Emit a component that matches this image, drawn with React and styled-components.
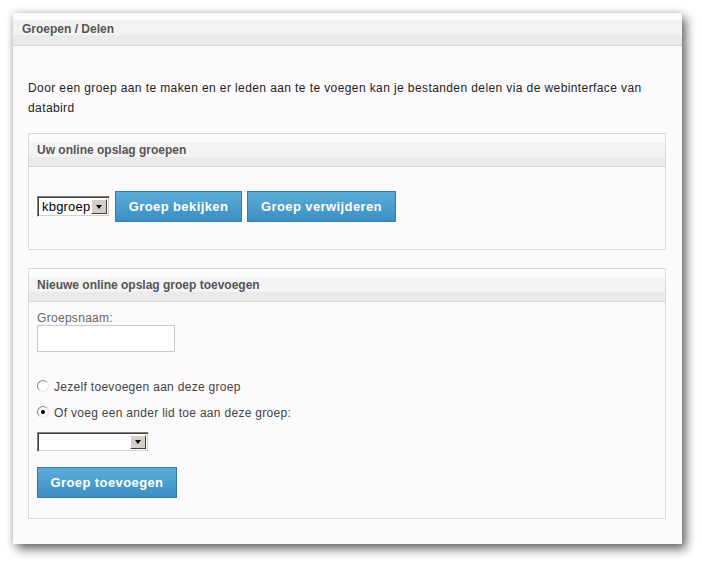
import React from "react";
import styled, { createGlobalStyle } from "styled-components";

const GlobalStyle = createGlobalStyle`
  html, body {
    margin: 0;
    padding: 0;
    background: #ffffff;
    font-family: "Liberation Sans", Arial, sans-serif;
  }
`;

const Page = styled.div`
  padding: 13px 20px 20px 13px;
  min-height: 565px;
  box-sizing: border-box;
`;

const Panel = styled.div`
  width: 669px;
  background: #fdfafd;
  box-shadow: 4px 5px 10px rgba(0, 0, 0, 0.6), -1px -1px 6px rgba(0, 0, 0, 0.12);
  padding-bottom: 25px;
`;

const BarHeader = styled.div`
  height: ${(p) => p.h || 32}px;
  display: flex;
  align-items: center;
  padding-left: ${(p) => p.pl || 8}px;
  border-bottom: 1px solid #d4d2d4;
  background: linear-gradient(
    #fdfcfd 0,
    #fdfcfd ${(p) => p.w || 8}px,
    #f4f3f4 ${(p) => p.w || 8}px,
    #f4f3f4 ${(p) => p.m || 23}px,
    #ebeaeb ${(p) => p.m || 23}px
  );
`;

const Title = styled.span`
  font-size: 12px;
  font-weight: bold;
  color: #555555;
`;

const Content = styled.div`
  padding: 0 16px 0 15px;
`;

const Intro = styled.p`
  margin: 32px 0 15px;
  font-size: 12px;
  line-height: 20px;
  letter-spacing: 0.4px;
  color: #222222;
`;

const Box = styled.div`
  border: 1px solid #dcdadc;
  margin-top: ${(p) => p.mt || 0}px;
`;

const BoxBody = styled.div`
  padding: ${(p) => p.pad};
  display: flex;
  flex-direction: column;
  align-items: flex-start;
`;

const Row = styled.div`
  display: flex;
  align-items: center;
  gap: ${(p) => p.gap || 5}px;
  height: 31px;
`;

const SelectBox = styled.div`
  box-sizing: border-box;
  width: ${(p) => p.w}px;
  height: ${(p) => p.h}px;
  margin-top: ${(p) => p.mt || 0}px;
  display: flex;
  background: #ffffff;
  border-style: solid;
  border-width: 1px;
  border-color: #808080 #ffffff #ffffff #808080;
  box-shadow: inset 1px 1px 0 #404040, inset -1px -1px 0 #d4d0c8;
  padding: 2px;
`;

const SelectValue = styled.span`
  flex: 1;
  font-size: 13px;
  line-height: 15px;
  padding-left: 2px;
  color: #000000;
  letter-spacing: 0.2px;
`;

const ArrowButton = styled.span`
  box-sizing: border-box;
  width: 16px;
  display: flex;
  align-items: center;
  justify-content: center;
  background: #d4d0c8;
  border-style: solid;
  border-width: 1px;
  border-color: #ffffff #404040 #404040 #ffffff;
  &::after {
    content: "";
    border-left: 3.5px solid transparent;
    border-right: 3.5px solid transparent;
    border-top: 4px solid #000000;
  }
`;

const Button = styled.button`
  box-sizing: border-box;
  width: ${(p) => p.w}px;
  height: 31px;
  margin-top: ${(p) => p.mt || 0}px;
  border: 1px solid #2e7db0;
  background: linear-gradient(#5badd8, #3c8ec3);
  color: #ffffff;
  font-family: "Liberation Sans", Arial, sans-serif;
  font-size: 13px;
  font-weight: bold;
  letter-spacing: 0.4px;
  padding: 0;
  cursor: pointer;
`;

const Label = styled.div`
  font-size: 12px;
  line-height: 14px;
  color: #666666;
  letter-spacing: 0.3px;
`;

const TextInput = styled.input`
  box-sizing: border-box;
  width: 138px;
  height: 27px;
  border: 1px solid #c9c7c9;
  background: #ffffff;
  margin: 0;
`;

const RadioRow = styled.label`
  display: flex;
  align-items: center;
  height: 20px;
  margin-top: ${(p) => p.mt}px;
  font-size: 12px;
  letter-spacing: 0.3px;
  color: #444444;
`;

const Radio = styled.input`
  appearance: none;
  box-sizing: border-box;
  width: 12px;
  height: 12px;
  margin: 0 5px 3px 0;
  border-radius: 50%;
  border: 1px solid;
  border-color: #8a8a8a #e4e4e4 #e4e4e4 #8a8a8a;
  background: #ffffff;
  display: grid;
  place-items: center;
  &:checked::after {
    content: "";
    width: 4px;
    height: 4px;
    border-radius: 50%;
    background: #000000;
  }
`;

export default function App() {
  return (
    <Page>
      <GlobalStyle />
      <Panel>
        <BarHeader h={32} pl={9} w={7} m={22}>
          <Title>Groepen / Delen</Title>
        </BarHeader>
        <Content>
          <Intro>
            Door een groep aan te maken en er leden aan te te voegen kan je
            bestanden delen via de webinterface van databird
          </Intro>

          <Box>
            <BarHeader>
              <Title>Uw online opslag groepen</Title>
            </BarHeader>
            <BoxBody pad="24px 8px 27px">
              <Row>
                <SelectBox w={73} h={21}>
                  <SelectValue>kbgroep</SelectValue>
                  <ArrowButton />
                </SelectBox>
                <Button w={127}>Groep bekijken</Button>
                <Button w={149}>Groep verwijderen</Button>
              </Row>
            </BoxBody>
          </Box>

          <Box mt={18}>
            <BarHeader>
              <Title>Nieuwe online opslag groep toevoegen</Title>
            </BarHeader>
            <BoxBody pad="9px 8px 20px">
              <Label>Groepsnaam:</Label>
              <TextInput type="text" />
              <RadioRow mt={25}>
                <Radio type="radio" name="lid" />
                Jezelf toevoegen aan deze groep
              </RadioRow>
              <RadioRow mt={6}>
                <Radio type="radio" name="lid" defaultChecked />
                Of voeg een ander lid toe aan deze groep:
              </RadioRow>
              <SelectBox w={112} h={20} mt={9}>
                <SelectValue />
                <ArrowButton />
              </SelectBox>
              <Button w={140} mt={15}>
                Groep toevoegen
              </Button>
            </BoxBody>
          </Box>
        </Content>
      </Panel>
    </Page>
  );
}
